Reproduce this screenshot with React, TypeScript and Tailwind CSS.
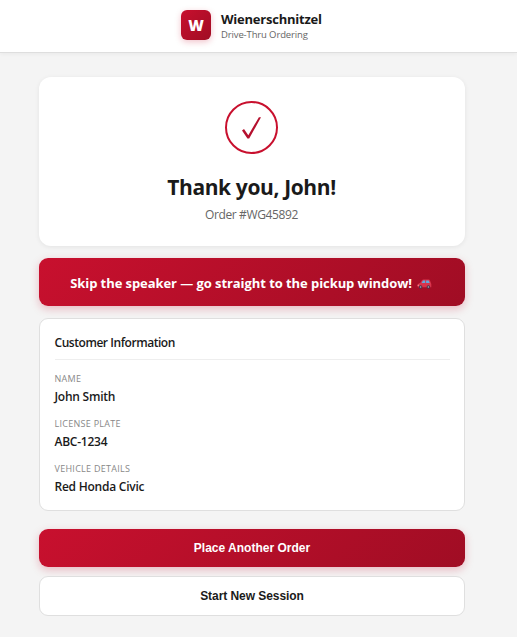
import type { ReactNode } from "react";

function CheckBadge() {
  return (
    <div className="mr-px flex size-[53px] items-center justify-center rounded-full border-2 border-[#c8102e] bg-white">
      <svg width="24" height="28" viewBox="0 0 24 28" fill="none">
        <path d="M2 16.4 L4 15.1 L8.3 21.2 L18.9 3.2 H21 L9.2 24.6 H7.4 Z" fill="#b5102e" />
      </svg>
    </div>
  );
}

function CarIcon() {
  return (
    <svg className="mt-px ml-[5px] inline-block" width="15" height="12" viewBox="0 0 15 12">
      <path d="M.6 8.2 C.6 6 1.6 5.5 3.2 5.1 L5 2.2 Q5.4 1.4 6.4 1.4 H11.6 Q12.6 1.4 13 2.4 L14.3 6 V9.2 H.8Z" fill="#d9344c" />
      <path d="M4.6 5 L6 2.6 H8.2 V5Z M9.1 2.6 H11.7 L12.7 5 H9.1Z" fill="#62a9dc" />
      <circle cx="3.6" cy="9" r="1.8" fill="#47364b" />
      <circle cx="11.4" cy="9" r="1.8" fill="#47364b" />
      <circle cx="3.6" cy="9" r=".8" fill="#b4a9b8" />
      <circle cx="11.4" cy="9" r=".8" fill="#b4a9b8" />
      <path d="M.6 6.8 H1.9 V7.8 H.6Z" fill="#f3b0a0" />
    </svg>
  );
}

function Field({ label, value }: { label: ReactNode; value: ReactNode }) {
  return (
    <div className="h-[45px]">
      <dt className="h-[18px] text-[9px] leading-[18px] font-medium tracking-[0.28px] text-[#888]">{label}</dt>
      <dd className="h-[18px] text-[12px] leading-[18px] font-semibold tracking-[-0.24px] text-[#1a1a1a]">{value}</dd>
    </div>
  );
}

export default function App() {
  return (
    <div className="min-h-[637px] w-full bg-[#f4f4f4] font-['Open_Sans','Noto_Sans',sans-serif] whitespace-nowrap text-[#1a1a1a]">
      <header className="flex h-[53px] items-start border-b border-[#dedede] bg-white pt-[10px] pl-[181px] shadow-[0_1px_4px_rgba(0,0,0,0.05)]">
        <div className="flex size-[30px] items-center justify-center rounded-[6px] bg-linear-135 from-[#c8102e] to-[#a00d24] pt-px text-[15px] font-extrabold text-white shadow-[0_2px_6px_rgba(200,16,46,0.25)]">
          W
        </div>
        <div className="ml-[10px]">
          <h1 className="h-[18px] text-[13px] leading-[19px] font-bold tracking-[-0.23px]">Wienerschnitzel</h1>
          <p className="h-[14px] text-[9.5px] leading-[14px] tracking-[-0.13px] text-[#666]">Drive-Thru Ordering</p>
        </div>
      </header>

      <main className="ml-[39px] flex w-[426px] flex-col pt-[24px]">
        <section className="flex h-[169px] flex-col items-center rounded-[12px] bg-white pt-[24px] shadow-[0_1px_5px_rgba(0,0,0,0.07)]">
          <CheckBadge />
          <h2 className="mt-[18px] mr-px text-[21px] leading-[30px] font-bold tracking-[-0.38px]">Thank you, John!</h2>
          <p className="mt-[4px] mr-px text-[12px] leading-[18px] tracking-[-0.36px] text-[#666]">Order #WG45892</p>
        </section>

        <div className="mt-[12px] flex h-[48px] items-center justify-center rounded-[9px] bg-linear-135 from-[#c8102e] to-[#a00d24] pt-[3px] pr-[2px] text-[13px] font-bold tracking-[-0.07px] text-white shadow-[0_3px_9px_rgba(200,16,46,0.25)]">
          <span>Skip the speaker — go straight to the pickup window!</span>
          <CarIcon />
        </div>

        <section className="mt-[12px] h-[193px] rounded-[9px] border border-[#dfdfdf] bg-white px-[14.5px] pt-[14px]">
          <h3 className="h-[27px] border-b border-[#eee] text-[12px] leading-[20px] font-semibold tracking-[-0.45px]">Customer Information</h3>
          <dl className="pt-[10px]">
            <Field label="NAME" value="John Smith" />
            <Field label="LICENSE PLATE" value="ABC-1234" />
            <Field label="VEHICLE DETAILS" value="Red Honda Civic" />
          </dl>
        </section>

        <button className="mt-[18px] h-[38px] rounded-[9px] bg-linear-135 from-[#c8102e] to-[#a00d24] font-['Liberation_Sans',Arial,sans-serif] text-[12px] font-bold text-white shadow-[0_3px_9px_rgba(200,16,46,0.25)]">
          Place Another Order
        </button>
        <button className="mt-[9px] h-[40px] rounded-[9px] border border-[#dfdfdf] bg-white font-['Liberation_Sans',Arial,sans-serif] text-[12px] font-bold tracking-[-0.06px]">
          Start New Session
        </button>
      </main>
    </div>
  );
}
